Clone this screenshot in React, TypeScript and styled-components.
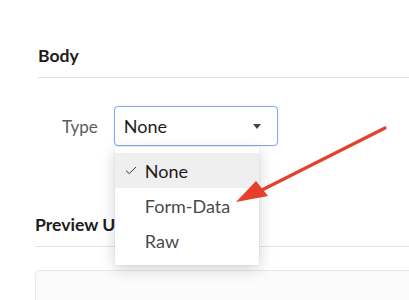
import React from 'react'
import styled, { createGlobalStyle } from 'styled-components'

const GlobalStyle = createGlobalStyle`
  html, body {
    margin: 0;
    padding: 0;
    background: #ffffff;
    font-family: Lato, "Open Sans", sans-serif;
    overflow: hidden;
  }
`

const options = ['None', 'Form-Data', 'Raw']

export default function App() {
  const selected = 'None'

  return (
    <>
      <GlobalStyle />
      <Page>
        <Section $indent={38} $top={46}>
          <Heading>Body</Heading>
          <Divider />
          <FieldRow>
            <Label>Type</Label>
            <SelectWrap>
              <SelectBox>
                <SelectValue>{selected}</SelectValue>
                <Caret />
              </SelectBox>
              <Menu>
                {options.map((opt) => (
                  <MenuItem key={opt} $active={opt === selected}>
                    <Check>{opt === selected ? <CheckIcon /> : null}</Check>
                    {opt}
                  </MenuItem>
                ))}
              </Menu>
            </SelectWrap>
          </FieldRow>
        </Section>

        <Section $indent={35} $top={69}>
          <Heading>Preview URL</Heading>
          <Divider />
          <PreviewCard />
        </Section>

        <Annotation width="409" height="300" viewBox="0 0 409 300">
          <line x1="385" y1="128" x2="258" y2="192" stroke="#e5402b" strokeWidth="3.2" strokeLinecap="round" />
          <polygon points="236,202 256,181 268,196" fill="#e5402b" />
        </Annotation>
      </Page>
    </>
  )
}

const CheckIcon = () => (
  <svg width="12" height="9" viewBox="0 0 12 9">
    <path d="M1 4.5 L4.2 7.6 L11 1" fill="none" stroke="#3a3a3a" strokeWidth="1" />
  </svg>
)

const Page = styled.div`
  position: relative;
  width: 409px;
  height: 300px;
  overflow: hidden;
`

const Section = styled.section<{ $indent: number; $top: number }>`
  padding-left: ${(p) => p.$indent}px;
  padding-top: ${(p) => p.$top}px;
`

const Heading = styled.h3`
  margin: 0;
  font-size: 17.6px;
  line-height: 20px;
  font-weight: 700;
  color: #1c1c1c;
`

const Divider = styled.div`
  height: 1px;
  background: #e3e3e3;
  margin-top: 11px;
`

const FieldRow = styled.div`
  display: flex;
  align-items: center;
  gap: 16px;
  margin-top: 28px;
  padding-left: 24px;
`

const Label = styled.span`
  font-size: 17px;
  color: #5b5b5b;
`

const SelectWrap = styled.div`
  position: relative;
`

const SelectBox = styled.div`
  box-sizing: border-box;
  width: 164px;
  height: 40px;
  display: flex;
  align-items: center;
  justify-content: space-between;
  padding: 0 16px 0 9px;
  border: 1px solid #86ace6;
  border-radius: 4px;
  box-shadow: 0 0 2px rgba(120, 160, 230, 0.35);
  background: #fff;
`

const SelectValue = styled.span`
  font-size: 18px;
  color: #1c1c1c;
`

const Caret = styled.span`
  width: 0;
  height: 0;
  border-left: 4px solid transparent;
  border-right: 4px solid transparent;
  border-top: 5px solid #3b4657;
`

const Menu = styled.div`
  position: absolute;
  top: 41px;
  left: 1px;
  width: 144px;
  padding: 6px 0 7px;
  background: #fff;
  box-shadow: 0 4px 14px rgba(0, 0, 0, 0.18), 0 0 1px rgba(0, 0, 0, 0.15);
  z-index: 2;
`

const MenuItem = styled.div<{ $active: boolean }>`
  display: flex;
  align-items: center;
  height: 35px;
  font-size: 18px;
  color: ${(p) => (p.$active ? '#1c1c1c' : '#4a4a4a')};
  background: ${(p) => (p.$active ? '#efefef' : 'transparent')};
`

const Check = styled.span`
  width: 30px;
  display: flex;
  justify-content: flex-start;
  padding-left: 10px;
  box-sizing: border-box;
`

const PreviewCard = styled.div`
  margin-top: 23px;
  height: 60px;
  border: 1px solid #e8e8e8;
  border-right: none;
  border-radius: 5px 0 0 5px;
  background: #fbfbfb;
`

const Annotation = styled.svg`
  position: absolute;
  top: 0;
  left: 0;
  pointer-events: none;
  z-index: 3;
`
